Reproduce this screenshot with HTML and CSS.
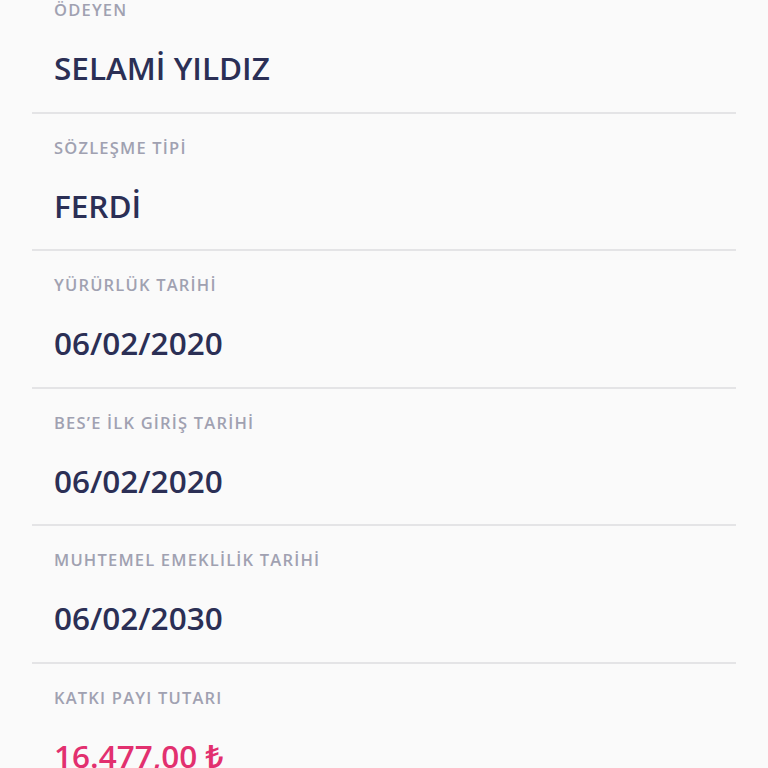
FILE: index.html
```html
<!DOCTYPE html>
<html lang="tr">
<head>
  <meta charset="UTF-8" />
  <meta name="viewport" content="width=device-width, initial-scale=1.0" />
  <title>Sözleşme Detayı</title>
  <link rel="stylesheet" href="styles.css">
</head>
<body>
  <div class="details">
    <div class="row">
      <div class="label">ÖDEYEN</div>
      <div class="value">SELAMİ YILDIZ</div>
    </div>
    <div class="row">
      <div class="label">SÖZLEŞME TİPİ</div>
      <div class="value">FERDİ</div>
    </div>
    <div class="row">
      <div class="label">YÜRÜRLÜK TARİHİ</div>
      <div class="value">06/02/2020</div>
    </div>
    <div class="row">
      <div class="label">BES’E İLK GİRİŞ TARİHİ</div>
      <div class="value">06/02/2020</div>
    </div>
    <div class="row">
      <div class="label">MUHTEMEL EMEKLİLİK TARİHİ</div>
      <div class="value">06/02/2030</div>
    </div>
    <div class="row">
      <div class="label">KATKI PAYI TUTARI</div>
      <div class="value amount">16.477,00 ₺</div>
    </div>
  </div>
</body>
</html>
```

FILE: styles.css
```css
/* BASE */
* {
  margin: 0;
  padding: 0;
  box-sizing: border-box;
}
html, body {
  height: 100%;
  overflow: hidden;
}
body {
  font-family: "Open Sans", "Noto Sans", sans-serif;
  background: #fafafa;
  color: #2b2f55;
}
/* DETAIL LIST (scrolled a little) */
.details {
  margin: -24px 32px 0;
}
.row {
  padding: 24px 22px 23.5px;
  border-bottom: 2px solid #e4e4e6;
}
.label {
  font-size: 16.5px;
  line-height: 20px;
  letter-spacing: 1.2px;
  font-weight: 600;
  color: #a0a1b1;
}
.value {
  margin-top: 28px;
  font-size: 31.5px;
  line-height: 40px;
  font-weight: 600;
}
.amount {
  color: #e2306f;
}
```
